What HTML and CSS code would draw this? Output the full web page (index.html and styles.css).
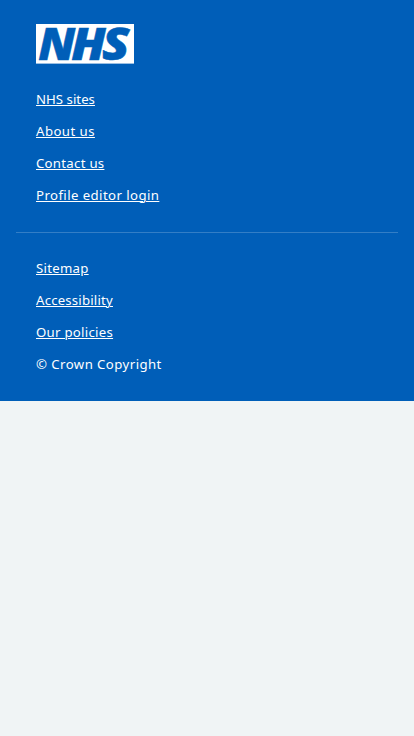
FILE: index.html
```html
<!DOCTYPE html>
<html lang="en">
<head>
<meta charset="utf-8">
<meta name="viewport" content="width=device-width, initial-scale=1">
<title>NHS</title>
<link rel="stylesheet" href="styles.css">
</head>
<body>
<footer class="footer">
  <a class="logo" href="#" aria-label="NHS">
    <svg width="98" height="40" viewBox="0 0 98 40">
      <rect width="98" height="39.6" fill="#fff"/>
      <g class="logo-text">
        <text x="2.2" y="35.5" textLength="37" lengthAdjust="spacingAndGlyphs">N</text>
        <text x="35.2" y="35.5" textLength="34.5" lengthAdjust="spacingAndGlyphs">H</text>
        <text x="66" y="35.5" textLength="27.5" lengthAdjust="spacingAndGlyphs">S</text>
      </g>
    </svg>
  </a>
  <ul class="links">
    <li><a class="sites" href="#">NHS sites</a></li>
    <li><a class="about" href="#">About us</a></li>
    <li><a class="contact" href="#">Contact us</a></li>
    <li><a class="login" href="#">Profile editor login</a></li>
  </ul>
  <ul class="links legal">
    <li><a class="sitemap" href="#">Sitemap</a></li>
    <li><a class="access" href="#">Accessibility</a></li>
    <li><a class="policies" href="#">Our policies</a></li>
    <li><span class="copyright">© Crown Copyright</span></li>
  </ul>
</footer>
</body>
</html>
```
FILE: styles.css
```css
* { box-sizing: border-box; }
body {
  margin: 0;
  background: #f0f4f5;
  font-family: "Noto Sans", "Open Sans", sans-serif;
}
.footer {
  height: 401px;
  padding: 24px 16px 0;
  background: #005eb8;
  color: #fff;
}
.logo { display: block; width: 98px; height: 40px; margin-left: 20px; }
.logo svg { display: block; overflow: visible; }
.logo-text {
  fill: #005eb8;
  stroke: #005eb8;
  stroke-width: .5px;
  font: italic 800 43.5px "Open Sans", sans-serif;
}
.links {
  list-style: none;
  margin: 0;
  padding: 23px 20px 0;
  font-size: 13.2px;
  font-weight: 450;
  line-height: 24px;
  letter-spacing: .28px;
}
.links li { height: 24px; margin-bottom: 8px; }
.links a {
  color: #fff;
  text-decoration: underline;
  text-decoration-thickness: 1px;
  text-underline-offset: 1px;
}
.links .sites { letter-spacing: .03px; }
.links .about { letter-spacing: .45px; }
.links .login { letter-spacing: .42px; }
.links .access { letter-spacing: .2px; }
.links .copyright { letter-spacing: .44px; }
.legal {
  margin-top: 25px;
  border-top: 1px solid #337ec6;
}
```
